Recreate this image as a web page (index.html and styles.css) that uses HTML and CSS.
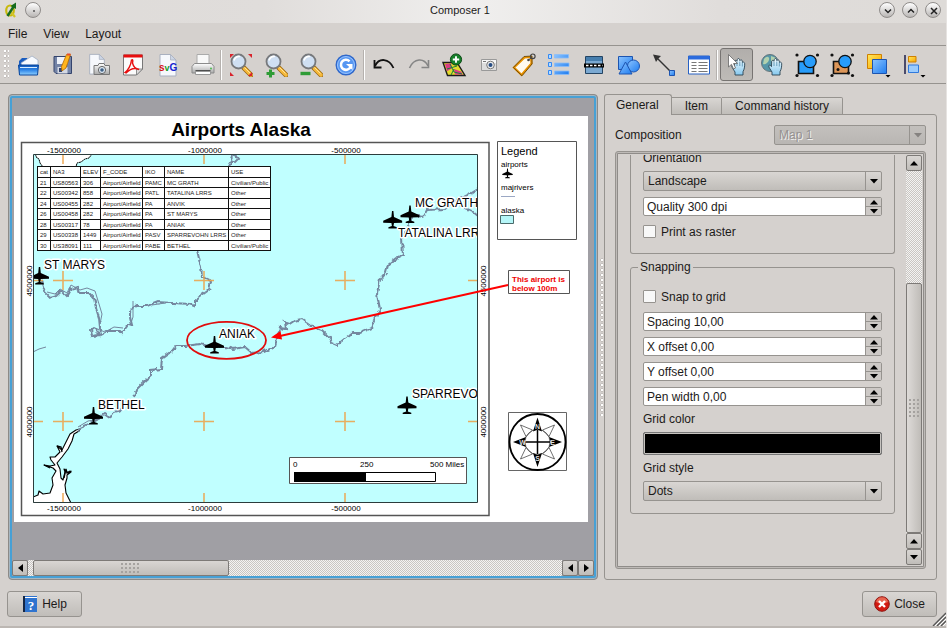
FILE: index.html
```html
<!DOCTYPE html>
<html lang="en">
<head>
<meta charset="utf-8">
<title>Composer 1</title>
<link rel="stylesheet" href="styles.css">
</head>
<body>
<svg class="defs" width="0" height="0" aria-hidden="true">
  <defs>
    <linearGradient id="blue" x1="0" y1="0" x2="1" y2="1"><stop offset="0" stop-color="#8cc4ff"/><stop offset="1" stop-color="#1f7df0"/></linearGradient>
    <linearGradient id="folder" x1="0" y1="0" x2="0" y2="1"><stop offset="0" stop-color="#0f55b8"/><stop offset=".5" stop-color="#2f86e8"/><stop offset="1" stop-color="#8fd0ff"/></linearGradient>
    <linearGradient id="metal" x1="0" y1="0" x2="0" y2="1"><stop offset="0" stop-color="#fff"/><stop offset="1" stop-color="#a9a9a9"/></linearGradient>
    <linearGradient id="gold" x1="0" y1="0" x2="1" y2="1"><stop offset="0" stop-color="#ffe95c"/><stop offset="1" stop-color="#f9a300"/></linearGradient>
    <linearGradient id="hand" x1="0" y1="0" x2="0" y2="1"><stop offset="0" stop-color="#f2fbff"/><stop offset="1" stop-color="#85c8ee"/></linearGradient>
    <symbol id="lens" viewBox="0 0 24 24">
      <path d="M15 15l7 7" stroke="#9a6a18" stroke-width="5" stroke-linecap="round"/>
      <path d="M15.500 15.500l6.500 6.500" stroke="#f6b93a" stroke-width="3.400" stroke-linecap="round"/>
      <path d="M15.500 14.500l6 6" stroke="#ffe39a" stroke-width="1"/>
      <circle cx="9.500" cy="8.500" r="7" fill="#cfdff2" stroke="#77797c" stroke-width="1.800"/>
      <path d="M5 7.500a5 5 0 0 1 6-4" stroke="#fff" stroke-width="1.600" fill="none"/>
    </symbol>
    <symbol id="page" viewBox="0 0 24 24">
      <path d="M4 1.500h10.500l5.500 5.500v16H4z" fill="#f6f8fc" stroke="#a9b0bf"/>
      <path d="M14.500 1.500v5.500h5.500z" fill="#cdd6e6" stroke="#a9b0bf" stroke-width=".8"/>
    </symbol>
    <symbol id="grab" viewBox="0 0 16 18">
      <path d="M4 17.500V14.500C2.500 12 .8 10 .8 8.500c.2-1.300 1.600-1 2.700.6L3.700 4c.2-1.500 1.800-1.500 2.200-.2L6.300 2c.5-1.400 2-1.200 2.300.1l.3 1c.6-1.200 2.200-1 2.400.5l.1 1.400c1-.8 2.300-.3 2.300 1.200 0 3-.3 5.500-1.700 8v3.300z" fill="url(#hand)" stroke="#2a4352" stroke-width=".9"/>
      <path d="M6 4.500v4M8.800 4v4.500M11.300 5v4" stroke="#4d88a8" stroke-width=".8"/>
    </symbol>
    <symbol id="plane" viewBox="-10 -10 20 20">
      <path d="M-.7-9H.7L1.300-3 9.500.8V2.800L1.300 3 .8 6 4.300 7.200V8.500H-4.300V7.200L-.8 6-1.300 3-9.500 2.800V.8L-1.300-3z"/>
    </symbol>
    <symbol id="down" viewBox="0 0 8 5"><path d="M0 0h8L4 4.500z"/></symbol>
    <symbol id="up" viewBox="0 0 8 5"><path d="M0 4.500h8L4 0z"/></symbol>
  </defs>
</svg>

<header class="titlebar">
  <svg class="logo" width="14" height="16" viewBox="0 0 14 16"><ellipse cx="6" cy="8.500" rx="3.800" ry="5" fill="none" stroke="#c8b90c" stroke-width="2.200"/><path d="M7 10l4 5" stroke="#d3c52a" stroke-width="2.200"/><path d="M3.500 14L10 4" stroke="#156b1d" stroke-width="2.400"/><path d="M6.500 4L12 0.500 12 7z" fill="#156b1d"/></svg>
  <button class="knob" aria-label="Window menu"><svg width="16" height="16" viewBox="0 0 16 16"><circle cx="8" cy="8" r="1" fill="#555"/></svg></button>
  <h1>Composer 1</h1>
  <button class="knob" aria-label="Minimize"><svg width="16" height="16" viewBox="0 0 16 16"><path d="M5 6.500l3 3 3-3"/></svg></button>
  <button class="knob" aria-label="Maximize"><svg width="16" height="16" viewBox="0 0 16 16"><path d="M5 9.500l3-3 3 3"/></svg></button>
  <button class="knob" aria-label="Close window"><svg width="16" height="16" viewBox="0 0 16 16"><path d="M5 5l6 6M11 5l-6 6"/></svg></button>
</header>

<nav class="menubar"><a href="#file">File</a><a href="#view">View</a><a href="#layout">Layout</a></nav>

<div class="toolbar" role="toolbar" aria-label="Composer">
  <span class="grip"></span>
  <button aria-label="Open template"><svg viewBox="0 0 24 24"><path d="M3 8l3-3h5l1 2h9v15H3z" fill="#1a5dc0"/><path d="M5 10l11-7 6 4v6H6z" fill="#f7faff" stroke="#98a7bf" stroke-width=".7"/><path d="M2.500 12h20l-1 10h-18z" fill="url(#folder)" stroke="#0b479c"/><path d="M4 14.500h17" stroke="#d6ecff"/></svg></button>
  <button aria-label="Save template"><svg viewBox="0 0 24 24"><path d="M3 3.500h17.500v17H5l-2-2z" fill="#7383a6" stroke="#34446d"/><path d="M6 4h11v7H6z" fill="#eef2f9"/><path d="M6.500 14h10v6.500h-10z" fill="#d4d9e4"/><path d="M8 15h3v4H8z" fill="#34446d"/><path d="M15.500 1.500h4L15 15l-4 3-.5-4.500z" fill="#ffb51f" stroke="#b36a00" stroke-width=".8"/><path d="M16 1.500h3.500" stroke="#e94d2a" stroke-width="2"/></svg></button>
  <button aria-label="Export as image"><svg viewBox="0 0 24 24"><use href="#page" x="0" width="22" height="22"/><path d="M8 12.500h4l1-2h5l1 2h4.500v9H8z" fill="url(#metal)" stroke="#777"/><circle cx="16" cy="17" r="3.600" fill="#dbe6f2" stroke="#666"/><circle cx="16" cy="17" r="1.800" fill="#3f6186"/></svg></button>
  <button aria-label="Export as PDF"><svg viewBox="0 0 24 24"><path d="M2.500 2h19v14l-6 6h-13z" fill="#fbfbfb" stroke="#777"/><path d="M2.500 1.500h19v3h-19z" fill="#e80e0e"/><path d="M15.500 22v-6h6z" fill="#ddd" stroke="#777" stroke-width=".8"/><path d="M4 19.500c3-2 6-7.500 6.500-12.500 1.500-1 1.500 1 1 3 1 4 3 6 6.500 6.500-4-2-9-.5-13 3.500z" fill="none" stroke="#e80e0e" stroke-width="1.400"/></svg></button>
  <button aria-label="Export as SVG"><svg viewBox="0 0 24 24"><use href="#page" width="24" height="24"/><text x="3" y="18" font-family="Liberation Sans" font-weight="bold" font-size="9"><tspan fill="#d80f17" font-size="10">s</tspan><tspan fill="#159a22">v</tspan><tspan fill="#1824cf" font-size="10">G</tspan></text></svg></button>
  <button aria-label="Print"><svg viewBox="0 0 24 24"><path d="M6 1.500h12v11H6z" fill="#f8f8f8" stroke="#aaa"/><path d="M3.500 10.500h17l2.500 3v6.500H1v-6.500z" fill="url(#metal)" stroke="#8b8b8b"/><path d="M4.500 18h15" stroke="#333" stroke-width="1.600"/><path d="M4.500 18.500h15v3h-15z" fill="#fff" stroke="#999"/><circle cx="20" cy="15.500" r=".9" fill="#4b4"/></svg></button>
  <span class="sep"></span>
  <button aria-label="Zoom full"><svg viewBox="0 0 24 24"><use href="#lens"/><g fill="#d8232c"><path d="M1 1h4L1 5z"/><path d="M23 1v4l-4-4z"/><path d="M1 23v-4l4 4z"/><path d="M23 23h-4l4-4z"/></g></svg></button>
  <button aria-label="Zoom in"><svg viewBox="0 0 24 24"><use href="#lens"/><path d="M6.500 16.500v8M2.500 20.500h8" stroke="#2f9c36" stroke-width="3"/></svg></button>
  <button aria-label="Zoom out"><svg viewBox="0 0 24 24"><use href="#lens"/><path d="M1.500 20.500h10" stroke="#2f9c36" stroke-width="3.400"/></svg></button>
  <button aria-label="Refresh"><svg viewBox="0 0 24 24"><circle cx="12" cy="12" r="9.800" fill="#5797f2" stroke="#3068ca" stroke-width="1.400"/><circle cx="12" cy="12" r="8.500" fill="none" stroke="#acd0ff" stroke-width=".8"/><path d="M15.500 8.300a5 5 0 1 0 1.200 5" fill="none" stroke="#fff" stroke-width="2.600"/><path d="M12 11h6.500V17z" fill="#fff"/></svg></button>
  <span class="sep"></span>
  <button aria-label="Undo"><svg viewBox="0 0 24 24"><path d="M3 13C7 4.500 17 5 21.500 15" fill="none" stroke="#111" stroke-width="1.800"/><path d="M2.500 7v7.500H9.500" fill="none" stroke="#111" stroke-width="1.800"/></svg></button>
  <button aria-label="Redo"><svg viewBox="0 0 24 24"><path d="M21 13C17 4.500 7 5 2.500 15" fill="none" stroke="#858585" stroke-width="1.600"/><path d="M21.500 7v7.500H14.500" fill="none" stroke="#858585" stroke-width="1.600"/></svg></button>
  <button aria-label="Add new map"><svg viewBox="0 0 24 24"><path d="M1 9.500h14l8 13H5.500z" fill="#e3d92c" stroke="#1c1c1c" stroke-width="1.400"/><path d="M3 11l6-.8 1 5-5 3zM12 16l7 2.500 2 3.300-8-.4z" fill="#d93b87"/><path d="M8 11l4 8 8 2M5 16l10-3M9 22l3-6" stroke="#17833b" fill="none"/><circle cx="14" cy="6.500" r="5.600" fill="#16802a" stroke="#0b4915"/><path d="M14 3.300v6.400M10.800 6.500h6.400" stroke="#fff" stroke-width="1.900"/></svg></button>
  <button aria-label="Add image"><svg viewBox="0 0 24 24"><path d="M4.500 6.500h15v11h-15z" fill="#ddd" stroke="#999"/><path d="M5 7h14v3H5z" fill="#f7f7f7"/><circle cx="13.500" cy="12" r="3.800" fill="#eee" stroke="#777"/><circle cx="13.500" cy="12" r="2" fill="#274d83"/><path d="M6 8.500h3" stroke="#777"/></svg></button>
  <button aria-label="Add label"><svg viewBox="0 0 24 24"><path d="M2 14.500L12.500 4.500l6.500-.5.500 6.500L9.500 22z" fill="#fffaf0" stroke="#e89100" stroke-width="2.200"/><path d="M1.300 14.500L12 3.500l8-.5v8L10 22.800z" fill="none" stroke="#5b3d06" stroke-width=".8"/><circle cx="16.500" cy="7" r="1.300" fill="#444"/><path d="M17 6.500l2.500-2" stroke="#444"/><circle cx="20.800" cy="3.300" r="2.300" fill="none" stroke="#444" stroke-width="1.200"/></svg></button>
  <button aria-label="Add legend"><svg viewBox="0 0 24 24"><g fill="#b6dbff" stroke="#3289f5"><path d="M1.500 1.500h3v4h-3zM1.500 9.500h3v4h-3zM1.500 17.500h3v4h-3z"/></g><g fill="url(#blue)" stroke="#8bbdf8" stroke-width=".8"><path d="M7.500 1.500h14v3.500h-14zM7.500 10h14.500v3.500h-14.500zM7.500 18h14.500v3.500h-14.500z"/></g></svg></button>
  <button aria-label="Add scale bar"><svg viewBox="0 0 24 24"><path d="M3.500 3.500h17v17h-17z" fill="#7ba9d2" stroke="#244463"/><path d="M4 4h16v4H4z" fill="#467eae"/><path d="M2 10.500h20v4H2z" fill="#000"/><path d="M4 12.500h16.500" stroke="#fff" stroke-width="1.600" stroke-dasharray="2.500 1.500"/></svg></button>
  <button aria-label="Add shape"><svg viewBox="0 0 24 24"><path d="M1.500 3.500h14v13h-14z" fill="url(#blue)" stroke="#1d54b0"/><circle cx="16.500" cy="13" r="6" fill="url(#blue)" stroke="#1d54b0"/><path d="M2 21L8.500 9 15 21z" fill="url(#blue)" stroke="#1d54b0"/></svg></button>
  <button aria-label="Add arrow"><svg viewBox="0 0 24 24"><path d="M3 3l16 16" stroke="#333" stroke-width="1.500"/><path d="M1 1.500l8 1.500-2.800 2.800L4 9z" fill="#333"/><path d="M17.500 17.500h5v5h-5z" fill="url(#blue)" stroke="#1d54b0"/></svg></button>
  <button aria-label="Add attribute table"><svg viewBox="0 0 24 24"><path d="M1.500 3h21v18h-21z" fill="#fff" stroke="#2761c4"/><path d="M1.500 3h21v3.500h-21z" fill="#2c6bdd"/><path d="M4.500 9.500h5M4.500 12.500h5M4.500 15.500h5M4.500 18.500h5M11.500 9.500h9M11.500 12.500h9M11.500 15.500h9M11.500 18.500h9" stroke="#777" stroke-width="1.200"/></svg></button>
  <span class="sep"></span>
  <button class="on" aria-label="Select and move item" aria-pressed="true"><svg viewBox="0 0 24 24"><use href="#grab" x="6" y="4" width="16" height="19"/><path d="M3.500 1.500v12.500l3-2.700 2 4.700 2-1-2-4.500h4z" fill="#fff" stroke="#666" stroke-width=".8"/></svg></button>
  <button aria-label="Move item content"><svg viewBox="0 0 24 24"><circle cx="10" cy="10" r="8.500" fill="#5697a8" stroke="#65757c"/><path d="M4 6c3-4 6-2 5 1S5 12 3 11zM11 3l5 2-1 4-4-1z" fill="#b2d1ae"/><use href="#grab" x="8" y="4" width="16" height="19"/></svg></button>
  <button aria-label="Group items"><svg viewBox="0 0 24 24"><path d="M3.500 8.500h15v12h-15z" fill="#279cfa" stroke="#111" stroke-width="1.600"/><circle cx="15" cy="8.500" r="6.200" fill="#279cfa" stroke="#111" stroke-width="1.300"/><g fill="#111"><circle cx="2" cy="2" r="1.600"/><circle cx="22.500" cy="2" r="1.600"/><circle cx="2" cy="22.500" r="1.600"/><circle cx="22.500" cy="22.500" r="1.600"/></g></svg></button>
  <button aria-label="Ungroup items"><svg viewBox="0 0 24 24"><path d="M3.500 8.500h15v12h-15z" fill="#dc9659" stroke="#111" stroke-width="1.600"/><circle cx="15" cy="8.500" r="6.200" fill="#279cfa" stroke="#111" stroke-width="1.300"/><g fill="#111"><circle cx="2" cy="2" r="1.600"/><circle cx="22.500" cy="2" r="1.600"/><circle cx="2" cy="22.500" r="1.600"/><circle cx="22.500" cy="22.500" r="1.600"/><circle cx="8" cy="16.500" r="1.500"/><circle cx="18.500" cy="20" r="1.500"/></g></svg></button>
  <button aria-label="Raise selected items"><svg viewBox="0 0 24 24"><path d="M2.500 1.500h14v14h-14z" fill="url(#gold)" stroke="#cf8000"/><path d="M7.500 6.500h14v14h-14z" fill="url(#blue)" stroke="#1d54b0"/><path d="M20.500 22h5L23 24.500z"/></svg></button>
  <button aria-label="Align selected items"><svg viewBox="0 0 24 24"><path d="M5 2v19" stroke="#3c3c60" stroke-width="1.800"/><path d="M8.500 3.500h7.500v5.500h-7.500z" fill="url(#gold)" stroke="#cf8000"/><path d="M8.500 12h10v7.500h-10z" fill="#9cccfd" stroke="#2f79dd"/><path d="M20.500 22h5L23 24.500z"/></svg></button>
</div>

<main>
  <section class="view" aria-label="Composition page">
    <div class="canvas">
      <div class="paper">
        <svg width="574" height="406" viewBox="14 116 574 406" role="img" aria-label="Map of airports in Alaska">
          <defs>
            <clipPath id="mapclip"><path d="M33 154H477.500V502.500H33z"/></clipPath>
            <filter id="meander" x="-5%" y="-5%" width="110%" height="110%"><feTurbulence type="fractalNoise" baseFrequency=".18" numOctaves="2" seed="4" result="n"/><feDisplacementMap in="SourceGraphic" in2="n" scale="5" xChannelSelector="R" yChannelSelector="G"/></filter>
          </defs>
          <text class="heading" x="241" y="136" text-anchor="middle">Airports Alaska</text>
          <path d="M21.500 142.500H489V515.500H21.500z" fill="#fff" stroke="#555" stroke-width="1.500"/>
          <g clip-path="url(#mapclip)">
            <path d="M33 154H478V503H33z" fill="#c0ffff"/>
            <path d="M35 154l2 4 2 1 1 4 3 4h33l1-4 4-1 4-3 4-1 3-4z" fill="#fff" stroke="#000" stroke-dasharray="2 .5"/>
            <path d="M33 498V497L38 495 39 491 43 494 50 493 53 485 52 478 56 471 53 468 44 465 50 466 55 465 51 460 50 457 55 457 60 452 57 446 62 450 66 442 70 434 76 430 80 429 79 431 74 434 72 441 68 449 62 457 57 463 60 469 61 478 63 480 65 472 64 469 68 473 71 471 71 472 67 475 67 478 65 485 66 493 71 503H33z" fill="#fff" stroke="#000" stroke-width="1.100" stroke-linejoin="round"/>
            <path d="M64 478l2-9 1 4 3-2M44 465l6 3M57 446l4 1 1 5" fill="none" stroke="#000" stroke-width="1.300"/>
            <g class="river">
              <g filter="url(#meander)">
                <path d="M41 280L45 292 50 297 57 295 62 291 67 296 71 289 78 287 80 293H89L94 298 96 308 99 318 100 328 99 335 92 336 91 330 94 328 100 335 107 331H120L122 333 128 325 132 325 130 317V310L137 306 147 306 157 302 173 303 190 304 195 306 195 300 202 295 209 290 211 281 202 277 201 267 197 250"/>
                <path d="M78 429L89 424 97 420 104 414 110 418 114 412 122 410M134 397L136 390 143 383 151 376V370L161 369 162 358 173 350 176 346 185 346 200 344 213 347 226 347 233 349 245 347 252 353 263 352 275 346 278 335 280 328 286 329 285 322 288 325 294 321 302 319 313 327 322 330 330 338 332 343 337 345 343 340 352 333 360 333 372 328 377 315 380 310 378 300 377 293 380 280 386 273 388 265 397 258 403 255 402 238 408 227 413 215 423 217 427 210 445 209 457 200 470 194 478 189"/>
                <path d="M460 206L472 211 478 216M227 168l4-7 3-7 4 5-4 4-4 0"/>
              </g>
              <path class="thin" d="M47 292l8 2 5-5 7 4 4-8 9 5 7-2 8 3 4 13 3 10-2 10M95 328l10 4 9-5 9 1M130 326l3-9 0-16M152 305l13-2M78 427l10-6 12-2M150 374l7-7"/>
              <path class="thin" d="M33 352l6-3 7-2"/>
            </g>
            <g stroke="#eda044" stroke-opacity=".85" stroke-width="1.600" fill="none">
              <path d="M63 154v10M204 154v10M345 154v10M63 493v10M204 493v10M345 493v10"/>
              <path d="M33 280.500h10M53 280.500h20M63 271v19M194 280.500h20M204 271v19M335 280.500h20M345 271v19M468 280.500h10"/>
              <path d="M33 421.500h10M53 421.500h20M63 412v19M194 421.500h20M204 412v19M335 421.500h20M345 412v19M468 421.500h10"/>
            </g>
            <g>
              <use href="#plane" x="382.700" y="210" width="20" height="20"/><use href="#plane" x="400" y="204.500" width="20" height="20"/><use href="#plane" x="29.500" y="266" width="20" height="20"/><use href="#plane" x="204.500" y="335" width="20" height="20"/><use href="#plane" x="83.500" y="406" width="20" height="20"/><use href="#plane" x="397" y="395.500" width="20" height="20"/>
            </g>
            <g class="place"><text x="415" y="207">MC GRATH</text><text x="398" y="237">TATALINA LRRS</text><text x="44" y="269">ST MARYS</text><text x="219" y="338">ANIAK</text><text x="98" y="409">BETHEL</text><text x="412" y="398">SPARREVOHN LRRS</text></g>
          </g>
          <path d="M33.500 154.500H477.500V502.500H33.500z" fill="none" stroke="#2c3c3c"/>
          <g class="small" text-anchor="middle">
            <text x="64" y="153">-1500000</text><text x="205" y="153">-1000000</text><text x="346" y="153">-500000</text>
            <text x="64" y="511">-1500000</text><text x="205" y="511">-1000000</text><text x="346" y="511">-500000</text>
            <text transform="translate(32 281) rotate(-90)">4500000</text><text transform="translate(32 422) rotate(-90)">4000000</text>
            <text transform="translate(486 281) rotate(-90)">4500000</text><text transform="translate(486 422) rotate(-90)">4000000</text>
          </g>
          <path d="M289.500 457.500h177v26h-177z" fill="#fff" stroke="#555"/>
          <path d="M294.500 472.500h141v9h-141z" fill="#fff" stroke="#000"/><path d="M294 472h72v10h-72z"/>
          <g class="small"><text x="293" y="467">0</text><text x="360" y="467">250</text><text x="430" y="467">500 Miles</text></g>
          <ellipse cx="226.500" cy="340.300" rx="39.500" ry="18.500" fill="none" stroke="#e00c0c" stroke-width="1.800"/>
          <path d="M508 285L280 336" stroke="#f00" stroke-width="1.800"/><path d="M271 337.500l9.500-6.500 1.500 8.500z" fill="#f00"/>
          <path d="M497.500 141.500h79v98h-79z" fill="#fff" stroke="#555"/>
          <text class="legend-title" x="501" y="155">Legend</text>
          <g class="small"><text x="501" y="167">airports</text><text x="501" y="190">majrivers</text><text x="501" y="213">alaska</text></g>
          <use href="#plane" x="502" y="168" width="11" height="11"/><path d="M501 196.500h14" stroke="#9ba8c4"/><path d="M500.500 215.500h13v8h-13z" fill="#b5f6f8" stroke="#4a6a6a"/>
          <path d="M508.500 270.500h61v23h-61z" fill="#fff" stroke="#555"/>
          <g class="note"><text x="512" y="282">This airport is</text><text x="512" y="291">below 100m</text></g>
          <path d="M508.500 412.500h58v58h-58z" fill="#fff" stroke="#666"/>
          <circle cx="537.500" cy="442" r="28" fill="none" stroke="#000" stroke-width="1.800"/>
          <g fill="none" stroke="#333" stroke-width=".7"><circle cx="537.500" cy="442" r="12.500"/><path d="M520.500 425l12 5-6.500 6.500zM554.500 425l-12 5 6.500 6.500zM520.500 459l12-5-6.500-6.500zM554.500 459l-12-5 6.500-6.500z"/></g>
          <path d="M525 442h25M537.500 430v24" stroke="#000" stroke-width="1.500"/>
          <path d="M537.500 417.500l4.500 14-4.500-2-4.500 2zM537.500 467l4.500-14-4.500 2-4.500-2zM513 442l13-5-2 5 2 5zM562 442l-13-5 2 5-2 5z"/>
          <g class="rose" text-anchor="middle"><text x="537.500" y="429">N</text><text x="537.500" y="461">S</text><text x="522.500" y="444.500">W</text><text x="552.500" y="444.500">E</text></g>
        </svg>
        <table>
          <colgroup><col class="c1"><col class="c2"><col class="c3"><col class="c4"><col class="c5"><col class="c6"><col class="c7"></colgroup>
          <tr><th>cat</th><th>NA3</th><th>ELEV</th><th>F_CODE</th><th>IKO</th><th>NAME</th><th>USE</th></tr>
          <tr><td>21</td><td>US80563</td><td>306</td><td>Airport/Airfield</td><td>PAMC</td><td>MC GRATH</td><td>Civilian/Public</td></tr>
          <tr><td>22</td><td>US00342</td><td>858</td><td>Airport/Airfield</td><td>PATL</td><td>TATALINA LRRS</td><td>Other</td></tr>
          <tr><td>24</td><td>US00455</td><td>282</td><td>Airport/Airfield</td><td>PA</td><td>ANVIK</td><td>Other</td></tr>
          <tr><td>26</td><td>US00458</td><td>282</td><td>Airport/Airfield</td><td>PA</td><td>ST MARYS</td><td>Other</td></tr>
          <tr><td>28</td><td>US00317</td><td>78</td><td>Airport/Airfield</td><td>PA</td><td>ANIAK</td><td>Other</td></tr>
          <tr><td>29</td><td>US00338</td><td>1449</td><td>Airport/Airfield</td><td>PASV</td><td>SPARREVOHN LRRS</td><td>Other</td></tr>
          <tr><td>30</td><td>US38091</td><td>111</td><td>Airport/Airfield</td><td>PABE</td><td>BETHEL</td><td>Civilian/Public</td></tr>
        </table>
      </div>
    </div>
    <div class="hscroll">
      <button class="step" aria-label="Scroll left"><svg width="5" height="8" viewBox="0 0 5 8"><path d="M5 0v8L0 4z"/></svg></button>
      <div class="track"><div class="thumb"><i class="dots"></i></div></div>
      <button class="step" aria-label="Scroll back"><svg width="5" height="8" viewBox="0 0 5 8"><path d="M5 0v8L0 4z"/></svg></button>
      <button class="step" aria-label="Scroll right"><svg width="5" height="8" viewBox="0 0 5 8"><path d="M0 0v8l5-4z"/></svg></button>
    </div>
  </section>

  <div class="splitter"><span></span></div>

  <aside class="side">
    <div class="tabs" role="tablist">
      <button class="current" role="tab" aria-selected="true">General</button><button role="tab" aria-selected="false">Item</button><button role="tab" aria-selected="false">Command history</button>
    </div>
    <div class="panel" role="tabpanel">
      <div class="row">
        <label for="composition">Composition</label>
        <div class="combo off"><select id="composition" disabled><option>Map 1</option></select><svg width="8" height="5"><use href="#down"/></svg></div>
      </div>
      <div class="scrollarea">
        <div class="content">
          <div class="group paper-group">
            <label class="caption" for="orientation">Orientation</label>
            <div class="combo"><select id="orientation"><option>Landscape</option></select><svg width="8" height="5"><use href="#down"/></svg></div>
            <div class="spin"><input type="text" aria-label="Quality" value="Quality 300 dpi"><span><button aria-label="Increase quality"><svg width="8" height="5"><use href="#up"/></svg></button><button aria-label="Decrease quality"><svg width="8" height="5"><use href="#down"/></svg></button></span></div>
            <label class="check"><input type="checkbox">Print as raster</label>
          </div>
          <fieldset class="group">
            <legend>Snapping</legend>
            <label class="check"><input type="checkbox">Snap to grid</label>
            <div class="spin"><input type="text" aria-label="Spacing" value="Spacing 10,00"><span><button aria-label="Increase spacing"><svg width="8" height="5"><use href="#up"/></svg></button><button aria-label="Decrease spacing"><svg width="8" height="5"><use href="#down"/></svg></button></span></div>
            <div class="spin"><input type="text" aria-label="X offset" value="X offset 0,00"><span><button aria-label="Increase X offset"><svg width="8" height="5"><use href="#up"/></svg></button><button aria-label="Decrease X offset"><svg width="8" height="5"><use href="#down"/></svg></button></span></div>
            <div class="spin"><input type="text" aria-label="Y offset" value="Y offset 0,00"><span><button aria-label="Increase Y offset"><svg width="8" height="5"><use href="#up"/></svg></button><button aria-label="Decrease Y offset"><svg width="8" height="5"><use href="#down"/></svg></button></span></div>
            <div class="spin"><input type="text" aria-label="Pen width" value="Pen width 0,00"><span><button aria-label="Increase pen width"><svg width="8" height="5"><use href="#up"/></svg></button><button aria-label="Decrease pen width"><svg width="8" height="5"><use href="#down"/></svg></button></span></div>
            <label class="caption" for="gridcolor">Grid color</label>
            <button class="swatch" id="gridcolor"></button>
            <label class="caption" for="gridstyle">Grid style</label>
            <div class="combo"><select id="gridstyle"><option>Dots</option></select><svg width="8" height="5"><use href="#down"/></svg></div>
          </fieldset>
        </div>
        <div class="vscroll">
          <button class="step" aria-label="Scroll up"><svg width="8" height="5"><use href="#up"/></svg></button>
          <div class="track"><div class="thumb"><i class="dots"></i></div></div>
          <button class="step" aria-label="Scroll back up"><svg width="8" height="5"><use href="#up"/></svg></button>
          <button class="step" aria-label="Scroll down"><svg width="8" height="5"><use href="#down"/></svg></button>
        </div>
      </div>
    </div>
  </aside>
</main>

<footer>
  <button class="push"><svg width="16" height="16" viewBox="0 0 16 16"><path d="M1 0h14v16H1z" fill="#2f74cf"/><path d="M1 0h2v16H1z" fill="#152745"/><path d="M3 1.500h12" stroke="#fff"/><text x="9" y="13.500" text-anchor="middle" font-size="13" font-family="Liberation Serif" font-weight="bold" fill="#fff">?</text></svg>Help</button>
  <button class="push"><svg width="16" height="16" viewBox="0 0 16 16"><circle cx="8" cy="8" r="7.300" fill="#d31a12" stroke="#8d1510"/><path d="M2 6a6.200 6.200 0 0 1 12 0Q8 9 2 6z" fill="#f0866c" opacity=".7"/><path d="M5 5l6 6M11 5l-6 6" stroke="#fff" stroke-width="2.400"/></svg>Close</button>
  <svg class="sizegrip" width="14" height="14" viewBox="0 0 14 14"><path d="M1 14L14 1M5 14l9-9M9 14l5-5" stroke="#555" stroke-width="1.400"/><path d="M3 14L14 3M7 14l7-7M11 14l3-3" stroke="#fff"/></svg>
</footer>
</body>
</html>
```
FILE: styles.css
```css
:root {
  --face: #d5d1ce;
  --line: #96938f;
  --button: linear-gradient(#d9d6d3, #c0bdb9);
}
* { box-sizing: border-box; }
body {
  margin: 0;
  min-height: 100vh;
  display: flex;
  flex-direction: column;
  background: var(--face);
  border-right: 1px solid #e6e3e1;
  color: #1c1a19;
  font: 12px/14px "Liberation Sans", Arial, sans-serif;
}
button, input, select { font: inherit; color: inherit; margin: 0; padding: 0; }
svg { display: block; }
.defs { position: absolute; }

/* Window title */
.titlebar {
  display: flex;
  align-items: center;
  gap: 7px;
  height: 23px;
  padding: 0 5px 4px 4px;
  background: linear-gradient(90deg, #dedbd8, #e0dddb 28%, #f0efee 50%, #e0dddb 76%, #dedbd8);
}
.titlebar h1 { flex: 1; margin: 0; text-align: center; font-size: 11px; font-weight: normal; }
.knob {
  width: 16px;
  height: 16px;
  border: 1px solid #8f8c8a;
  border-radius: 50%;
  background: linear-gradient(#fff, #b9b6b4);
  display: grid;
  place-items: center;
}
.knob path { fill: none; stroke: #222; stroke-width: 1.500; }

.menubar { display: flex; gap: 16px; height: 22px; padding: 4px 8px; }
.menubar a { color: inherit; text-decoration: none; }

/* Tools */
.toolbar {
  display: flex;
  align-items: center;
  gap: 2px;
  height: 39px;
  padding-left: 4px;
  border-top: 1px solid var(--line);
  border-bottom: 1px solid var(--line);
}
.toolbar button {
  width: 33px;
  height: 33px;
  border: 1px solid transparent;
  border-radius: 3px;
  background: none;
  display: grid;
  place-items: center;
}
.toolbar button svg { width: 24px; height: 24px; overflow: visible; }
.toolbar .on { border-color: #777472; background: linear-gradient(#b1aeab, #bebbb7); }
.sep { width: 1px; height: 30px; background: #fff; box-shadow: -1px 0 #b5b1ae; }
.grip { width: 5px; height: 30px; background: radial-gradient(circle at 1px 1px, #fff 1px, #aaa6a3 1px, transparent 2px) 0 0 / 4px 5px; }

/* Work area */
main { flex: 1; display: flex; padding: 10px 9px 0 8px; min-height: 0; }
.view {
  flex: 1;
  min-width: 0;
  display: flex;
  flex-direction: column;
  border: 1px solid #8d8a87;
  border-radius: 4px;
  padding: 3px;
  background: #a09fa4;
  box-shadow: inset 0 0 0 1px #a5b6c1, inset 0 0 0 3px #47a0d5;
}
.canvas { flex: 1; padding: 18px 2px; overflow: hidden; }
.paper { position: relative; width: 574px; background: #fff; }
.paper text { font-family: "Liberation Sans", Arial, sans-serif; }
.heading { font-size: 19px; font-weight: bold; }
.legend-title { font-size: 11px; }
.small { font-size: 8px; }
.note { font-size: 8px; font-weight: bold; fill: #f00000; }
.place { font-size: 12px; stroke: #fff; stroke-width: 3px; stroke-linejoin: round; paint-order: stroke; }
.rose { font-size: 7px; font-weight: bold; fill: #ddd; }
.river path { fill: none; stroke: #74879f; stroke-width: 2px; }
.river .thin { stroke-width: 1px; }
.paper table {
  position: absolute;
  left: 23px;
  top: 50px;
  width: 234px;
  height: 85px;
  table-layout: fixed;
  border-collapse: collapse;
  background: #fff;
  font-size: 6px;
  line-height: 8px;
}
.paper th, .paper td { border: 1px solid #111; padding: 1px 0 0 2px; font-weight: normal; text-align: left; white-space: nowrap; overflow: hidden; }
.c1 { width: 13px; }
.c2 { width: 30px; }
.c3 { width: 20px; }
.c4 { width: 42px; }
.c5 { width: 22px; }
.c6 { width: 64px; }
.c7 { width: 42px; }

/* Scroll bars */
.hscroll { display: flex; height: 16px; }
.vscroll { display: flex; flex-direction: column; width: 16px; }
.track { flex: 1; display: flex; background: repeating-conic-gradient(#f4f3f2 0 25%, #c9c6c2 0 50%) 0 0 / 2px 2px; }
.hscroll .track { padding-left: 5px; }
.vscroll .track { align-items: flex-end; }
.step { flex: none; width: 16px; height: 16px; border: 1px solid #7d7a77; border-radius: 2px; background: var(--button); display: grid; place-items: center; }
.thumb { border: 1px solid #7d7a77; border-radius: 2px; background: var(--button); display: grid; place-items: center; }
.hscroll .thumb { width: 37%; }
.vscroll .thumb { width: 16px; height: 69%; background: linear-gradient(90deg, #dedbd8, #bfbcb8); }
.dots { background: radial-gradient(circle at 1px 1px, #a5a29f 1px, transparent 1px) 0 0 / 4px 4px; }
.hscroll .dots { width: 19px; height: 11px; }
.vscroll .dots { width: 11px; height: 19px; }

.splitter { width: 6px; display: grid; place-items: center; }
.splitter span { width: 3px; height: 158px; background: radial-gradient(circle at 2px 2px, #fff 1px, #aaa6a3 1px, transparent 2px) 0 0 / 3px 5px; }

/* Properties */
.side { flex: none; width: 333px; display: flex; flex-direction: column; }
.tabs { display: flex; align-items: flex-end; height: 21px; margin-bottom: -1px; z-index: 1; }
.tabs button { height: 18px; padding: 0 13px; border: 1px solid var(--line); border-left: 0; background: var(--button); border-radius: 0 2px 0 0; }
.tabs .current { height: 21px; padding: 0 12px 1px 11px; border-left: 1px solid var(--line); border-bottom: 0; border-radius: 3px 3px 0 0; background: var(--face); }
.panel { flex: 1; display: flex; flex-direction: column; gap: 6px; padding: 10px; border: 1px solid var(--line); border-radius: 0 3px 3px 3px; }
.row { display: flex; align-items: center; justify-content: space-between; }
.row .combo { width: 152px; }
.scrollarea {
  flex: 1;
  min-height: 0;
  display: flex;
  overflow: hidden;
  border: 1px solid var(--line);
  border-radius: 3px;
  padding: 3px;
  box-shadow: inset 0 0 0 1px #bebab7, inset 0 0 0 2px #8f8c89;
}
.content { flex: 1; padding: 0 11px; overflow: hidden; }
.group {
  display: flex;
  flex-direction: column;
  gap: 6px;
  margin: 5px 0 0;
  min-width: 0;
  padding: 12px;
  border: 1px solid var(--line);
  border-radius: 3px;
}
.paper-group { margin-top: -4px; padding-top: 0; border-top: 0; }
legend { height: 16px; line-height: 16px; margin-left: -5px; padding: 0 2px; }
.caption { height: 14px; }

.combo { position: relative; height: 20px; }
.combo select {
  width: 100%;
  height: 100%;
  padding: 0 20px 0 4px;
  appearance: none;
  border: 1px solid var(--line);
  border-radius: 2px;
  background: linear-gradient(var(--line), var(--line)) right 15px top 0 / 1px 100% no-repeat, var(--button);
}
.combo svg { position: absolute; right: 4px; top: 8px; pointer-events: none; }
.off select { color: #949190; opacity: 1; text-shadow: 1px 1px #f1efee; background: linear-gradient(var(--line), var(--line)) right 15px top 0 / 1px 100% no-repeat, linear-gradient(#c3c0bd, #b9b6b3); }
.off svg { fill: #858280; }

.spin { display: flex; height: 19px; border: 1px solid var(--line); border-radius: 2px; background: #fff; }
.spin input { flex: 1; min-width: 0; border: 0; padding: 0 3px; background: none; }
.spin span { display: flex; flex-direction: column; width: 16px; border-left: 1px solid var(--line); }
.spin button { flex: 1; border: 0; background: #cdc9c6; display: grid; place-items: center; min-height: 0; }
.spin button + button { border-top: 1px solid var(--line); }

.check { display: flex; align-items: center; gap: 5px; height: 19px; }
.check input { appearance: none; width: 13px; height: 13px; border: 1px solid var(--line); border-radius: 1px; background: #f8f8f8; }
.swatch { height: 23px; border: 1px solid #777; border-radius: 2px; background: #000; box-shadow: inset 0 0 0 1px #c6c3bf; }

footer { position: relative; display: flex; justify-content: space-between; padding: 11px 9px 9px 7px; border-bottom: 2px solid #bcb7b3; }
.push { display: flex; align-items: center; justify-content: center; gap: 4px; width: 75px; height: 26px; border: 1px solid var(--line); border-radius: 3px; background: var(--button); }
.sizegrip { position: absolute; right: 0; bottom: 0; }
```
